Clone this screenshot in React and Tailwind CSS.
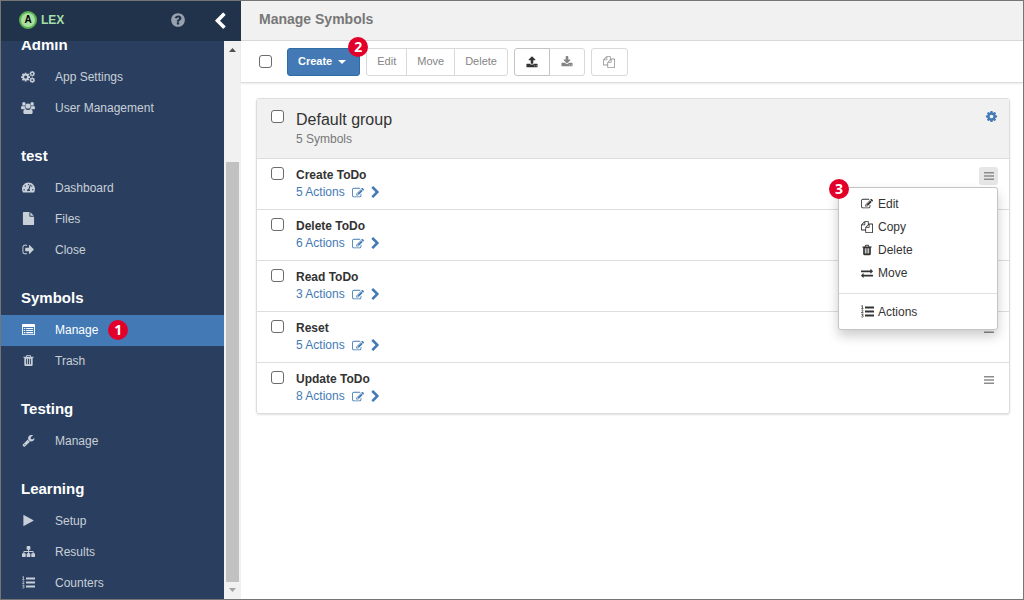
import React from "react";
import { FaTachometerAlt } from "react-icons/fa";

const PATHS = {
  trash:
    "M704 1376v-704q0-14-9-23t-23-9h-64q-14 0-23 9t-9 23v704q0 14 9 23t23 9h64q14 0 23-9t9-23zm256 0v-704q0-14-9-23t-23-9h-64q-14 0-23 9t-9 23v704q0 14 9 23t23 9h64q14 0 23-9t9-23zm256 0v-704q0-14-9-23t-23-9h-64q-14 0-23 9t-9 23v704q0 14 9 23t23 9h64q14 0 23-9t9-23zm-544-992h448l-48-117q-7-9-17-11h-317q-10 2-17 11zm928 32v64q0 14-9 23t-23 9h-96v948q0 83-47 143.5t-113 60.5h-832q-66 0-113-58.5t-47-141.5v-952h-96q-14 0-23-9t-9-23v-64q0-14 9-23t23-9h309l70-167q15-37 54-63t79-26h320q40 0 79 26t54 63l70 167h309q14 0 23 9t9 23z",
  edit:
    "M888 1184l116-116-152-152-116 116v56h96v96h56zm440-720q-16-16-33 1l-350 350q-17 17-1 33t33-1l350-350q17-17 1-33zm80 594v190q0 119-84.5 203.5t-203.5 84.5h-832q-119 0-203.5-84.5t-84.5-203.5v-832q0-119 84.5-203.5t203.5-84.5h832q63 0 117 25 15 7 18 23 3 17-9 29l-49 49q-14 14-32 8-23-6-45-6h-832q-66 0-113 47t-47 113v832q0 66 47 113t113 47h832q66 0 113-47t47-113v-126q0-13 9-22l64-64q15-15 35-7t20 29zm-96-738l288 288-672 672h-288v-288zm444 132l-92 92-288-288 92-92q28-28 68-28t68 28l152 152q28 28 28 68t-28 68z",
  copy:
    "M1696 384q40 0 68 28t28 68v1216q0 40-28 68t-68 28h-960q-40 0-68-28t-28-68v-288h-544q-40 0-68-28t-28-68v-672q0-40 20-88t48-76l408-408q28-28 76-48t88-20h416q40 0 68 28t28 68v328q68-40 128-40h416zm-544 213l-299 299h299v-299zm-640-384l-299 299h299v-299zm196 647l316-316v-416h-384v416q0 40-28 68t-68 28h-416v640h512v-256q0-40 20-88t48-76zm956 804v-1152h-384v416q0 40-28 68t-68 28h-416v640h896z",
  exchange:
    "M1792 1184v192q0 13-9.5 22.5t-22.5 9.5h-1376v192q0 13-9.5 22.5t-22.5 9.5q-12 0-24-10l-319-320q-9-9-9-22 0-14 9-23l320-320q9-9 23-9 13 0 22.5 9.5t9.5 22.5v192h1376q13 0 22.5 9.5t9.5 22.5zm0-544q0 14-9 23l-320 320q-9 9-23 9-13 0-22.5-9.5t-9.5-22.5v-192h-1376q-13 0-22.5-9.5t-9.5-22.5v-192q0-13 9.5-22.5t22.5-9.5h1376v-192q0-14 9-23t23-9q12 0 24 10l319 319q9 9 9 23z",
  cog:
    "M1152 896q0-106-75-181t-181-75-181 75-75 181 75 181 181 75 181-75 75-181zm512-109v222q0 12-8 23t-20 13l-185 28q-19 54-39 91 35 50 107 138 10 12 10 25t-9 23q-27 37-99 108t-94 71q-12 0-26-9l-138-108q-44 23-91 38-16 136-29 186-7 28-36 28h-222q-14 0-24.5-8.5t-11.5-21.5l-28-184q-49-16-90-37l-141 107q-10 9-25 9-14 0-25-11-126-114-165-168-7-10-7-23 0-12 8-23 15-21 51-66.5t54-70.5q-27-50-41-99l-183-27q-13-2-21-12.5t-8-23.5v-222q0-12 8-23t19-13l186-28q14-46 39-92-40-57-107-138-10-12-10-24 0-10 9-23 26-36 98.5-107.5t94.5-71.5q13 0 26 10l138 107q44-23 91-38 16-136 29-186 7-28 36-28h222q14 0 24.5 8.5t11.5 21.5l28 184q49 16 90 37l142-107q9-9 24-9 13 0 25 10 129 119 165 170 7 8 7 22 0 12-8 23-15 21-51 66.5t-54 70.5q26 50 41 98l183 28q13 2 21 12.5t8 23.5z",
  right:
    "M1363 877l-742 742q-19 19-45 19t-45-19l-166-166q-19-19-19-45t19-45l531-531-531-531q-19-19-19-45t19-45l166-166q19-19 45-19t45 19l742 742q19 19 19 45t-19 45z",
  upload:
    "M1344 1472q0-26-19-45t-45-19-45 19-19 45 19 45 45 19 45-19 19-45zm256 0q0-26-19-45t-45-19-45 19-19 45 19 45 45 19 45-19 19-45zm128-224v320q0 40-28 68t-68 28h-1472q-40 0-68-28t-28-68v-320q0-40 28-68t68-28h427q21 56 70.5 92t110.5 36h256q61 0 110.5-36t70.5-92h427q40 0 68 28t28 68zm-325-648q-17 40-59 40h-256v448q0 26-19 45t-45 19h-256q-26 0-45-19t-19-45v-448h-256q-42 0-59-40-17-39 14-69l448-448q18-19 45-19t45 19l448 448q31 30 14 69z",
  download:
    "M1344 1344q0-26-19-45t-45-19-45 19-19 45 19 45 45 19 45-19 19-45zm256 0q0-26-19-45t-45-19-45 19-19 45 19 45 45 19 45-19 19-45zm128-224v320q0 40-28 68t-68 28h-1472q-40 0-68-28t-28-68v-320q0-40 28-68t68-28h465l135 136q58 56 136 56t136-56l136-136h464q40 0 68 28t28 68zm-325-569q17 41-14 70l-448 448q-18 19-45 19t-45-19l-448-448q-31-29-14-70 17-39 59-39h256v-448q0-26 19-45t45-19h256q26 0 45 19t19 45v448h256q42 0 59 39z",
  sitemap:
    "M1792 1248v320q0 40-28 68t-68 28h-320q-40 0-68-28t-28-68v-320q0-40 28-68t68-28h96v-192h-512v192h96q40 0 68 28t28 68v320q0 40-28 68t-68 28h-320q-40 0-68-28t-28-68v-320q0-40 28-68t68-28h96v-192h-512v192h96q40 0 68 28t28 68v320q0 40-28 68t-68 28h-320q-40 0-68-28t-28-68v-320q0-40 28-68t68-28h96v-192q0-52 38-90t90-38h512v-192h-96q-40 0-68-28t-28-68v-320q0-40 28-68t68-28h320q40 0 68 28t28 68v320q0 40-28 68t-68 28h-96v192h512q52 0 90 38t38 90v192h96q40 0 68 28t28 68z",
  play:
    "M1576 927l-1328 738q-23 13-39.5 3t-16.5-36v-1472q0-26 16.5-36t39.5 3l1328 738q23 13 23 31t-23 31z",
  wrench:
    "M448 1472q0-26-19-45t-45-19-45 19-19 45 19 45 45 19 45-19 19-45zm644-420l-682 682q-37 37-90 37-52 0-91-37l-106-108q-38-36-38-90 0-53 38-91l681-681q39 98 114.5 173.5t173.5 114.5zm634-435q0 39-23 106-47 134-164.5 217.5t-258.5 83.5q-185 0-316.5-131.5t-131.5-316.5 131.5-316.5 316.5-131.5q58 0 121.500 16.5t107.5 46.5q16 11 16 28t-16 28l-293 169v224l193 107q5-3 79-48.5t135.5-81 70.5-35.5q15 0 23.5 10t8.5 25z",
  file:
    "M1152 512v-472q22 14 36 28l408 408q14 14 28 36h-472zm-128 32q0 40 28 68t68 28h544v1056q0 40-28 68t-68 28h-1344q-40 0-68-28t-28-68v-1600q0-40 28-68t68-28h800v544z",
  signOut:
    "M704 1440q0 4 1 20t.5 26.5-3 23.5-10 19.5-20.5 6.5h-320q-119 0-203.5-84.5t-84.5-203.5v-704q0-119 84.5-203.5t203.5-84.5h320q13 0 22.5 9.5t9.5 22.5q0 4 1 20t.5 26.5-3 23.5-10 19.5-20.5 6.5h-320q-66 0-113 47t-47 113v704q0 66 47 113t113 47h312l11.500 1 11.500 3 8 5.500 7 9 2 13.500zm928-544q0 26-19 45l-544 544q-19 19-45 19t-45-19-19-45v-288h-448q-26 0-45-19t-19-45v-384q0-26 19-45t45-19h448v-288q0-26 19-45t45-19 45 19l544 544q19 19 19 45z",
  help:
    "M1024 1376v-192q0-14-9-23t-23-9h-192q-14 0-23 9t-9 23v192q0 14 9 23t23 9h192q14 0 23-9t9-23zm256-672q0-88-55.5-163t-138.5-116-170-41q-243 0-371 213-15 24 8 42l132 100q7 6 19 6 16 0 25-12 53-68 86-92 34-24 86-24 48 0 85.5 26t37.5 59q0 38-20 61t-68 45q-63 28-115.5 86.5t-52.5 125.5v36q0 14 9 23t23 9h192q14 0 23-9t9-23q0-19 21.5-49.5t54.5-49.5q32-18 49-28.5t46-35 44.5-48 28-60.5 12.500-81zm384 192q0 209-103 385.500t-279.500 279.500-385.500 103-385.500-103-279.500-279.500-103-385.500 103-385.500 279.500-279.500 385.500-103 385.500 103 279.500 279.500 103 385.500z",
  listAlt:
    "M96 128h1600q96 0 96 96v1344q0 96-96 96h-1600q-96 0-96-96v-1344q0-96 96-96zm32 440v968h1536v-968zm128 120h192v150h-192zm320 0h960v150h-960zm-320 280h192v150h-192zm320 0h960v150h-960zm-320 280h192v150h-192zm320 0h960v150h-960z",
};

function Glyph({ name, className = "size-3" }) {
  return (
    <svg viewBox="0 0 1792 1792" fill="currentColor" fillRule="evenodd" aria-hidden="true" className={`shrink-0 ${className}`}>
      <path d={PATHS[name]} />
    </svg>
  );
}

function Cogs() {
  return (
    <svg viewBox="0 0 14 12" fill="currentColor" fillRule="evenodd" aria-hidden="true" className="h-3 w-[14px] shrink-0">
      <path transform="translate(-0.6 0.9) scale(0.0058)" d={PATHS.cog} />
      <path transform="translate(8 -0.5) scale(0.0036)" d={PATHS.cog} />
      <path transform="translate(8 5.9) scale(0.0036)" d={PATHS.cog} />
    </svg>
  );
}

function Users() {
  return (
    <svg viewBox="0 0 14 12" fill="currentColor" aria-hidden="true" className="h-3 w-[14px] shrink-0">
      <circle cx="2.9" cy="1.9" r="1.8" />
      <circle cx="11.1" cy="1.9" r="1.8" />
      <circle cx="7" cy="4" r="2.600" />
      <path d="M1.200 3.700C.3 4 0 5 0 6.200 0 6.900.5 7.200 1.200 7.200h2.400C4.200 6.800 4.600 6.700 4.900 6.600 4 5.700 3.700 4.900 3.800 4 2.800 4.400 1.900 4.200 1.200 3.700z" />
      <path d="M12.800 3.700c.9.3 1.200 1.300 1.200 2.500 0 .7-.5 1-1.200 1h-2.400C9.800 6.800 9.400 6.700 9.100 6.600 10 5.700 10.300 4.900 10.200 4 11.200 4.400 12.100 4.200 12.800 3.700z" />
      <path d="M4.500 6.900C2.900 7 2.300 8.500 2.300 10.200 2.300 11.400 3 12 4 12h6c1 0 1.700-.6 1.700-1.800 0-1.700-.6-3.200-2.200-3.300-.7.600-1.600 1-2.500 1s-1.800-.4-2.500-1z" />
    </svg>
  );
}

function ListOl() {
  return (
    <svg viewBox="0 0 13 13" fill="currentColor" aria-hidden="true" className="size-[13px] shrink-0">
      <path d="M4 1.500h9v2H4zM4 5.500h9v2H4zM4 9.500h9v2H4z" />
      <path
        d="M.4 1.100L1.400.5v3M.4 3.500h2M.4 5.300q1-.8 1.600 0 .3.800-1.500 2.300h1.900M.4 9.200h1.800l-1 1.200q1.300 0 1 1.200-.6.900-1.800.3"
        fill="none"
        stroke="currentColor"
        strokeWidth=".8"
      />
    </svg>
  );
}

const g = (name) => <Glyph name={name} />;
const nav = (name) => <Glyph name={name} className="size-[13px]" />;

const SECTIONS = [
  {
    title: "Admin",
    items: [
      { label: "App Settings", icon: <Cogs /> },
      { label: "User Management", icon: <Users /> },
    ],
  },
  {
    title: "test",
    items: [
      { label: "Dashboard", icon: <FaTachometerAlt className="size-[13px]" /> },
      { label: "Files", icon: nav("file") },
      { label: "Close", icon: nav("signOut") },
    ],
  },
  {
    title: "Symbols",
    items: [
      { label: "Manage", icon: nav("listAlt"), active: true, badge: "1" },
      { label: "Trash", icon: nav("trash") },
    ],
  },
  { title: "Testing", items: [{ label: "Manage", icon: nav("wrench") }] },
  {
    title: "Learning",
    items: [
      { label: "Setup", icon: nav("play") },
      { label: "Results", icon: nav("sitemap") },
      { label: "Counters", icon: <ListOl /> },
    ],
  },
];

const SYMBOLS = [
  { name: "Create ToDo", actions: 5, open: true },
  { name: "Delete ToDo", actions: 6 },
  { name: "Read ToDo", actions: 3 },
  { name: "Reset", actions: 5 },
  { name: "Update ToDo", actions: 8 },
];

const MENU = [
  { label: "Edit", icon: g("edit") },
  { label: "Copy", icon: g("copy") },
  { label: "Delete", icon: g("trash") },
  { label: "Move", icon: g("exchange") },
];

function Badge({ children, className = "" }) {
  return (
    <span
      className={`flex size-5 items-center justify-center rounded-full bg-[#e2002a] font-['Open_Sans',sans-serif] text-sm leading-5 font-bold text-white ${className}`}
    >
      {children}
    </span>
  );
}

function Check({ label }) {
  return (
    <input
      type="checkbox"
      aria-label={label}
      className="block size-[13px] shrink-0 appearance-none rounded-[3px] border border-[#6b6b6b] bg-white checked:bg-[#337ab7]"
    />
  );
}

function Bars() {
  return (
    <svg viewBox="0 0 10 8" className="h-2 w-[10px]" fill="currentColor" aria-hidden="true">
      <path d="M0 0h10v1.400H0zM0 3.200h10v1.500H0zM0 6.500h10V8H0z" />
    </svg>
  );
}

function Sidebar() {
  return (
    <aside className="flex w-60 shrink-0 flex-col bg-[#2a3f5f]">
      <div className="flex h-10 shrink-0 items-center bg-[#20334b] pr-3 pb-[2px] pl-[18px]">
        <a href="#home" className="flex items-center gap-1 text-xs font-bold text-[#a5dfa8]">
          <span className="flex size-[18px] items-center justify-center rounded-full border-2 border-[#5cb450] bg-[#a9dfa3] text-[10px] leading-none text-black">
            A
          </span>
          LEX
        </a>
        <button type="button" aria-label="Help" className="ml-auto text-[#98a1ad]">
          <Glyph name="help" className="size-4" />
        </button>
        <button type="button" aria-label="Collapse sidebar" className="ml-[25px] text-white">
          <Glyph name="right" className="size-[18px] rotate-180" />
        </button>
      </div>
      <div className="flex min-h-0 flex-1">
        <nav className="min-w-0 flex-1 overflow-hidden">
          <div className="-mt-7">
            {SECTIONS.map((s) => (
              <section key={s.title}>
                <h2 className="px-5 pt-[21px] pb-[6px] text-[15px] leading-[22px] font-bold text-white">{s.title}</h2>
                <ul>
                  {s.items.map((it) => (
                    <li key={it.label}>
                      <a
                        href="#nav"
                        className={`flex h-[31px] items-center pb-[2px] pl-5 text-xs ${
                          it.active ? "bg-[#437ab5] text-white" : "text-[#c9cfd8]"
                        }`}
                      >
                        <span className="flex w-[14px] justify-center">{it.icon}</span>
                        <span className="ml-5">{it.label}</span>
                        {it.badge && <Badge className="ml-[10px]">{it.badge}</Badge>}
                      </a>
                    </li>
                  ))}
                </ul>
              </section>
            ))}
          </div>
        </nav>
        <div aria-hidden="true" className="flex w-[17px] shrink-0 flex-col items-center bg-[#f1f1f1]">
          <svg viewBox="0 0 17 17" className="size-[17px] shrink-0">
            <path d="M5 11h7l-3.500-4z" fill="#505050" />
          </svg>
          <div className="flex w-[13px] flex-1 flex-col">
            <div className="flex-[104]" />
            <div className="flex-[420] bg-[#c1c1c1]" />
          </div>
          <svg viewBox="0 0 17 17" className="size-[17px] shrink-0">
            <path d="M5 6h7l-3.500 4z" fill="#a3a3a3" />
          </svg>
        </div>
      </div>
    </aside>
  );
}

const BTN = "flex h-7 items-center justify-center border bg-white px-[10px] text-[11px]";

function Toolbar() {
  return (
    <div className="flex h-[42px] shrink-0 items-center gap-[6px] border-b border-[#dcdcdc] bg-white pl-[18px] shadow-[0_1px_2px_rgba(0,0,0,0.08)]">
      <Check label="Select all symbols" />
      <div className="relative ml-[9px]">
        <button
          type="button"
          className="flex h-7 items-center gap-[6px] rounded-[3px] border border-[#2e6da4] bg-[#437ab5] pr-[13px] pl-[10px] text-[11px] font-bold text-white"
        >
          Create
          <svg viewBox="0 0 8 4" className="h-1 w-2" fill="currentColor" aria-hidden="true">
            <path d="M0 0h8L4 4z" />
          </svg>
        </button>
        <Badge className="absolute -top-[11px] -right-2">2</Badge>
      </div>
      <div className="flex text-[#858585]">
        <button type="button" className={`${BTN} rounded-l-[3px] border-[#d9d9d9]`}>Edit</button>
        <button type="button" className={`${BTN} -ml-px border-[#d9d9d9]`}>Move</button>
        <button type="button" className={`${BTN} -ml-px rounded-r-[3px] border-[#d9d9d9]`}>Delete</button>
      </div>
      <div className="flex">
        <button type="button" aria-label="Import" className={`${BTN} relative w-9 rounded-l-[3px] border-[#c4c4c4] text-[#333]`}>
          <Glyph name="upload" />
        </button>
        <button type="button" aria-label="Export" className={`${BTN} -ml-px w-9 rounded-r-[3px] border-[#d9d9d9] text-[#858585]`}>
          <Glyph name="download" />
        </button>
      </div>
      <button type="button" aria-label="Copy" className={`${BTN} w-[37px] rounded-[3px] border-[#d9d9d9] text-[#999]`}>
        <Glyph name="copy" />
      </button>
    </div>
  );
}

function ContextMenu() {
  return (
    <div className="absolute top-5 right-0 z-10 w-40 rounded-[3px] border border-[#c4c4c4] bg-white pt-1 pb-[6px] text-xs text-[#333] shadow-[0_6px_12px_rgba(0,0,0,0.2)]">
      <Badge className="absolute -top-[9px] -left-[10px]">3</Badge>
      {MENU.map((m) => (
        <button key={m.label} type="button" className="flex h-[23px] w-full items-center gap-[5px] pl-[22px]">
          {m.icon}
          {m.label}
        </button>
      ))}
      <hr className="mt-[9px] mb-[6px] border-[#e0e0e0]" />
      <button type="button" className="flex h-[23px] w-full items-center gap-1 pl-[22px]">
        <ListOl />
        Actions
      </button>
    </div>
  );
}

function SymbolRow({ symbol }) {
  return (
    <li className="flex items-start border-t border-[#ddd] pt-2 pr-[11px] pb-2 pl-[14px] text-xs">
      <Check label={`Select ${symbol.name}`} />
      <div className="ml-3 leading-[17px]">
        <h3 className="font-bold text-[#333]">{symbol.name}</h3>
        <div className="flex items-center text-[#437ab5]">
          <a href="#actions">{symbol.actions} Actions</a>
          <a href="#edit" aria-label="Edit actions" className="ml-[7px]">
            <Glyph name="edit" />
          </a>
          <a href="#show" aria-label="Show actions" className="ml-[5px]">
            <Glyph name="right" className="size-[13px]" />
          </a>
        </div>
      </div>
      <div className="relative ml-auto">
        <button
          type="button"
          aria-label={`Menu for ${symbol.name}`}
          className={`flex h-[18px] w-[19px] items-center justify-center rounded-[3px] text-[#8c8c8c] ${
            symbol.open ? "bg-[#e6e6e6]" : ""
          }`}
        >
          <Bars />
        </button>
        {symbol.open && <ContextMenu />}
      </div>
    </li>
  );
}

export default function App() {
  return (
    <div className="flex h-screen overflow-hidden border border-[#757575] bg-white font-['Liberation_Sans',Arial,sans-serif] text-[#333]">
      <Sidebar />
      <main className="flex min-w-0 flex-1 flex-col">
        <header className="flex h-10 shrink-0 items-center border-b border-[#d8d8d8] bg-[#f1f1f1] px-[18px]">
          <h1 className="pb-1 text-sm leading-5 font-bold text-[#777]">Manage Symbols</h1>
        </header>
        <Toolbar />
        <div className="px-[13px] pt-[15px] pl-[15px]">
          <section className="rounded-[3px] border border-[#ddd] shadow-[0_1px_2px_rgba(0,0,0,0.12)]">
            <div className="flex items-start bg-[#f1f1f1] pt-[11px] pr-[11px] pb-[10px] pl-[14px]">
              <Check label="Select default group" />
              <div className="ml-3">
                <h2 className="text-base leading-5 text-[#333]">Default group</h2>
                <p className="text-xs leading-[18px] text-[#777]">5 Symbols</p>
              </div>
              <button type="button" aria-label="Group settings" className="ml-auto text-[#437ab5]">
                <Glyph name="cog" className="size-[13px]" />
              </button>
            </div>
            <ul>
              {SYMBOLS.map((s) => (
                <SymbolRow key={s.name} symbol={s} />
              ))}
            </ul>
          </section>
        </div>
      </main>
    </div>
  );
}
